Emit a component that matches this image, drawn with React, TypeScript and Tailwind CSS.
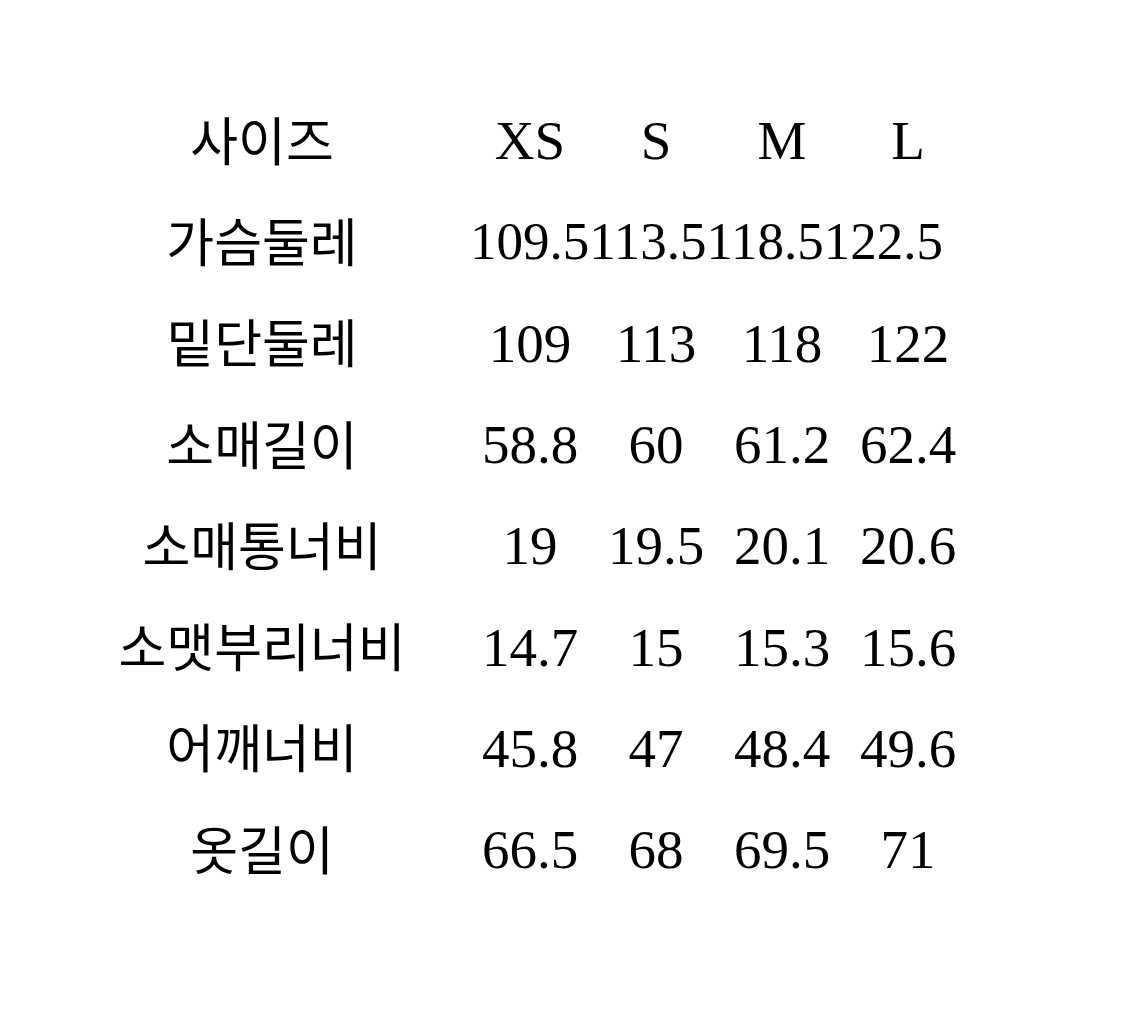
const sizes = ["XS", "S", "M", "L"];

const rows: { label: string; values: string[] }[] = [
  { label: "가슴둘레", values: ["109.5", "113.5", "118.5", "122.5"] },
  { label: "밑단둘레", values: ["109", "113", "118", "122"] },
  { label: "소매길이", values: ["58.8", "60", "61.2", "62.4"] },
  { label: "소매통너비", values: ["19", "19.5", "20.1", "20.6"] },
  { label: "소맷부리너비", values: ["14.7", "15", "15.3", "15.6"] },
  { label: "어깨너비", values: ["45.8", "47", "48.4", "49.6"] },
  { label: "옷길이", values: ["66.5", "68", "69.5", "71"] },
];

const serif = "font-['Liberation_Serif','Times_New_Roman',serif] text-black leading-none whitespace-nowrap";

function Row({ label, values, packed }: { label: string; values: string[]; packed?: boolean }) {
  return (
    <div className="flex items-center h-[101.3px]">
      <div className="w-[300px] pb-[4px] text-center text-[52px] leading-none font-['Noto_Sans_CJK_KR',sans-serif] text-black">
        {label}
      </div>
      {packed ? (
        <div className={`ml-[58px] text-[53px] ${serif}`}>{values.join("")}</div>
      ) : (
        <div className="ml-[55px] flex">
          {values.map((v, i) => (
            <div key={i} className={`w-[126px] text-center text-[55px] ${serif}`}>
              {v}
            </div>
          ))}
        </div>
      )}
    </div>
  );
}

export default function App() {
  return (
    <div className="w-[1125px] h-[1030px] bg-white pt-[90px] pl-[112px]">
      <Row label="사이즈" values={sizes} />
      {rows.map((r, i) => (
        <Row key={r.label} label={r.label} values={r.values} packed={i === 0} />
      ))}
    </div>
  );
}
